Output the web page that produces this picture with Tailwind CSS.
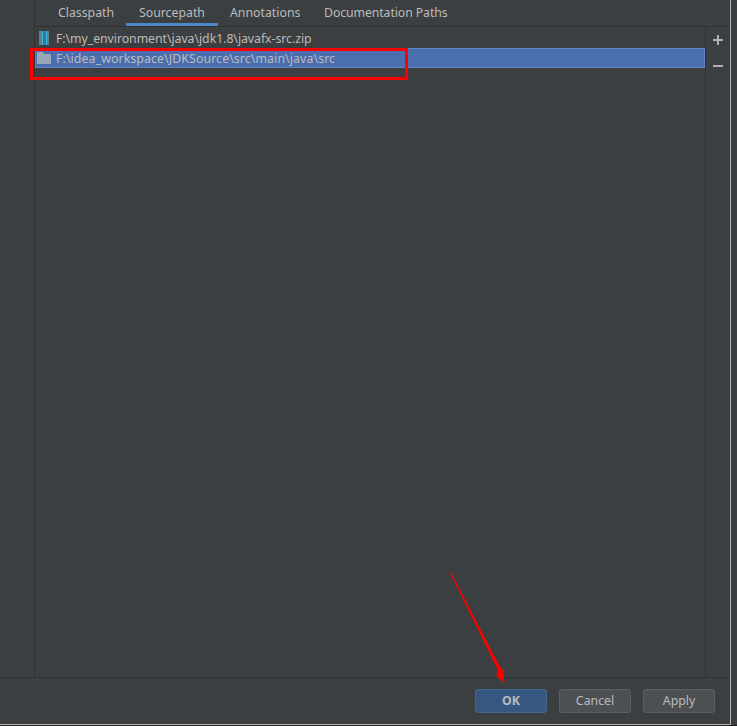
<!DOCTYPE html>
<html lang="en">
<head>
    <title>Sourcepath</title>
    <script src="https://cdn.jsdelivr.net/npm/@tailwindcss/browser@4"></script>
</head>
<body class="bg-[#3c3f41] overflow-hidden">
<div class="relative w-[737px] h-[726px] font-['Noto_Sans','Open_Sans',sans-serif] text-[12.3px] text-[#bbbbbb]">
    <div class="w-[731px] h-[725px] flex flex-col border-r border-b border-[#b5b7b8]">
        <div class="flex flex-1 min-h-0">
            <div class="w-[35px] border-r border-[#323232]"></div>
            <div class="flex-1 flex flex-col min-w-0">
                <!-- tabs -->
                <div class="flex h-[27px] border-b border-[#323232] pl-[11px]">
                    <div class="w-[80px] pl-[12px] pt-[4px] h-[26px]">Classpath</div>
                    <div class="w-[92px] pl-[13px] pt-[4px] h-[26px] border-b-[3px] border-[#4a88c7]">Sourcepath</div>
                    <div class="w-[94px] pl-[12px] pt-[4px] h-[26px]">Annotations</div>
                    <div class="pl-[12px] pt-[4px] h-[26px] tracking-[-0.1px]">Documentation Paths</div>
                </div>
                <div class="flex flex-1 min-h-0">
                    <div class="flex-1 pt-[1px] min-w-0">
                        <div class="h-[20px] pt-[2px] flex items-center pl-[4px] gap-[7px]">
                            <svg class="mb-[2px]" width="10" height="14" viewBox="0 0 10 14">
                                <rect x="0" y="0" width="10" height="14" fill="#5f7f8c"/>
                                <rect x="3" y="0" width="5" height="14" fill="#40b6e0"/>
                                <path d="M4 1h3M4 3h3M4 5h3M4 7h3M4 9h3M4 11h3M4 13h3" stroke="#2d3b42" stroke-width="1"/>
                            </svg>
                            <span class="tracking-[-0.05px]">F:\my_environment\java\jdk1.8\javafx-src.zip</span>
                        </div>
                        <div class="h-[20px] flex items-center pl-[1px] gap-[5px] bg-[#4b6eaf] border border-[#5f83c4]">
                            <svg width="14" height="12" viewBox="0 0 14 12">
                                <path d="M0 0h6l1 2h7v10H0z" fill="#9aa7b8"/>
                            </svg>
                            <span class="mt-[3px] tracking-[0.11px]">F:\idea_workspace\JDKSource\src\main\java\src</span>
                        </div>
                    </div>
                    <div class="w-[25px] border-l border-[#323232] flex flex-col items-center pt-[8px] gap-[20px]">
                        <svg width="10" height="10" viewBox="0 0 10 10"><path d="M5 0v10M0 5h10" stroke="#afb1b3" stroke-width="2"/></svg>
                        <svg width="10" height="2" viewBox="0 0 10 2"><path d="M0 1h10" stroke="#afb1b3" stroke-width="2"/></svg>
                    </div>
                </div>
            </div>
        </div>
        <!-- footer -->
        <div class="h-[47px] border-t border-[#323232] flex justify-end items-start gap-[12px] pt-[11px] pr-[15px]">
            <button class="w-[72px] h-[24px] rounded-[3px] bg-[#365880] border border-[#43688c] font-bold text-[#bbbbbb]">OK</button>
            <button class="w-[72px] h-[24px] rounded-[3px] bg-[#4c5052] border border-[#5e6060]">Cancel</button>
            <button class="w-[72px] h-[24px] rounded-[3px] bg-[#4c5052] border border-[#5e6060]">Apply</button>
        </div>
    </div>
    <!-- red annotations -->
    <div class="absolute left-[30px] top-[48px] w-[378px] h-[32px] border-[3px] border-[#ff0000]"></div>
    <svg class="absolute left-0 top-0" width="737" height="726" viewBox="0 0 737 726">
        <path d="M450 573L451 572.6L500.5 668L497.5 669.5z" fill="#ff0000"/>
        <path d="M496 675L504 668.5L503.5 683z" fill="#ff0000"/>
        <path d="M497.5 669L501 667L503 672L497 677z" fill="#ff0000"/>
    </svg>
    <div class="absolute left-0 top-[725px] w-[737px] h-[1px] bg-[#1e1e1e]"></div>
</div>
</body>
</html>
